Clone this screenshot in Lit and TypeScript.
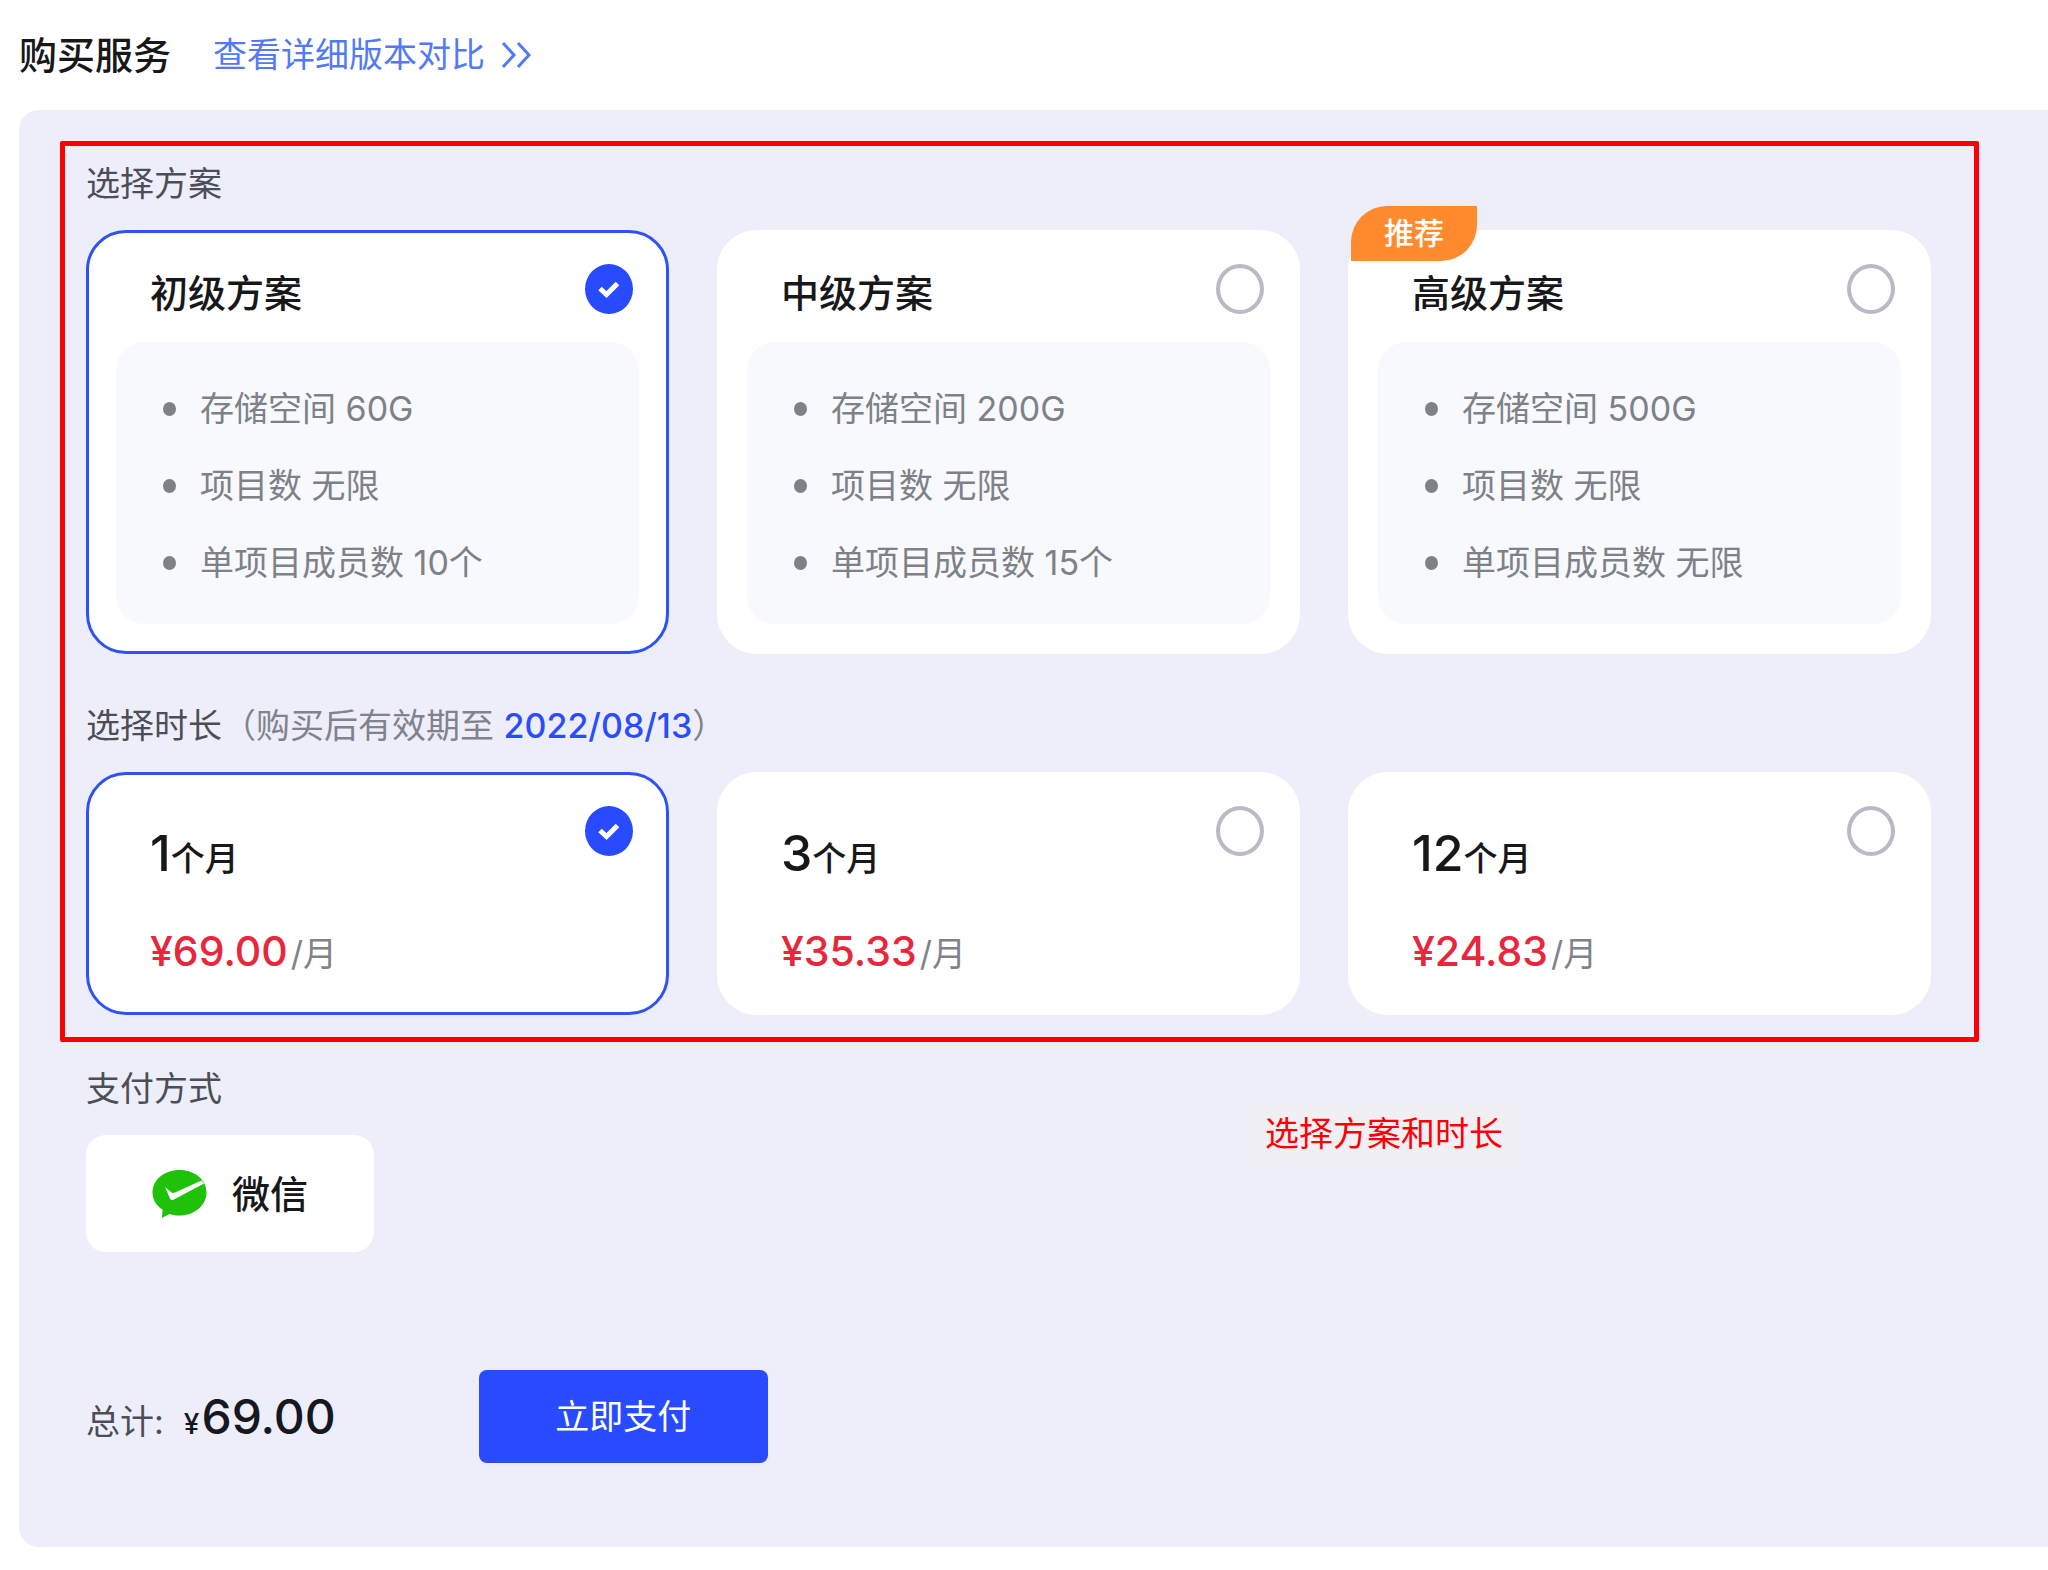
import { LitElement, html, css, svg, nothing } from "lit";
import { customElement, state } from "lit/decorators.js";

interface Plan {
  id: string;
  name: string;
  recommended?: boolean;
  features: string[];
}

interface Duration {
  months: number;
  price: string;
  total: string;
}

const PLANS: Plan[] = [
  { id: "basic", name: "初级方案", features: ["存储空间 60G", "项目数 无限", "单项目成员数 10个"] },
  { id: "middle", name: "中级方案", features: ["存储空间 200G", "项目数 无限", "单项目成员数 15个"] },
  { id: "senior", name: "高级方案", recommended: true, features: ["存储空间 500G", "项目数 无限", "单项目成员数 无限"] },
];

const DURATIONS: Duration[] = [
  { months: 1, price: "69.00", total: "69.00" },
  { months: 3, price: "35.33", total: "105.99" },
  { months: 12, price: "24.83", total: "297.96" },
];

const check = svg`<path d="M15 24.500 L21.5 30.5 L32.500 19.500" fill="none" stroke="#fff" stroke-width="5" />`;

@customElement("app-root")
export class AppRoot extends LitElement {
  @state() private plan = "basic";
  @state() private months = 1;

  static styles = css`
    :host {
      display: block;
      font-family: Inter, "Noto Sans CJK SC", sans-serif;
      font-size: 34px;
      line-height: 48px;
      color: #4c4e57;
      background: #fff;
      overflow-x: hidden;
    }
    * {
      box-sizing: border-box;
    }
    .header {
      display: flex;
      align-items: center;
      gap: 42px;
      padding: 31px 19px;
    }
    .title {
      margin: 0;
      font-size: 38px;
      font-weight: 500;
      color: #17181a;
    }
    .compare {
      display: flex;
      align-items: center;
      gap: 16px;
      color: #5479f7;
      text-decoration: none;
    }
    .chevrons {
      width: 30px;
      height: 26px;
    }
    .panel {
      margin: 0 0 23px 19px;
      padding: 31px 69px 84px 41px;
      border-radius: 20px 0 0 20px;
      background: #eeeefa;
    }
    .selection {
      display: flex;
      flex-direction: column;
      gap: 48px;
      padding: 14px 43px 22px 21px;
      border: 5px solid #fb0007;
      border-radius: 2px;
    }
    .group {
      min-width: 0;
      margin: 0;
      padding: 0;
      border: 0;
    }
    .label {
      display: block;
      margin: 0 0 22px;
      padding: 0;
      font-size: 34px;
      font-weight: 400;
    }
    .hint {
      color: #80838b;
    }
    .date {
      color: #2a4dfb;
      font-weight: 500;
    }
    .cards {
      display: grid;
      grid-template-columns: repeat(3, minmax(0, 1fr));
      gap: 48px;
    }
    .card {
      position: relative;
      padding: 27px;
      border: 3px solid #fff;
      border-radius: 40px;
      background: #fff;
      cursor: pointer;
    }
    .card.selected {
      border-color: #2f52f5;
    }
    .head {
      display: flex;
      justify-content: space-between;
      align-items: flex-start;
      padding: 4px 6px 20px 34px;
    }
    .name {
      font-size: 38px;
      line-height: 58px;
      font-weight: 500;
      color: #17181a;
    }
    .radio {
      position: relative;
      flex: none;
      width: 48px;
      height: 50px;
    }
    .radio input {
      display: block;
      appearance: none;
      width: 100%;
      height: 100%;
      margin: 0;
      border: 4px solid #b9bac6;
      border-radius: 50%;
      cursor: pointer;
    }
    .radio input:checked {
      border-color: #284bff;
      background: #284bff;
    }
    .tick {
      position: absolute;
      inset: 0;
      pointer-events: none;
    }
    .features {
      margin: 0;
      padding: 28px 20px 23px 47px;
      border-radius: 28px;
      background: #f7f9fd;
      list-style: none;
      color: #7e8187;
      line-height: 77px;
    }
    .feature {
      display: flex;
      align-items: center;
      gap: 24px;
    }
    .feature::before {
      content: "";
      width: 13px;
      height: 14px;
      border-radius: 50%;
      background: #7e8187;
    }
    .badge {
      position: absolute;
      top: -27px;
      left: 0;
      padding: 0 33px;
      border-radius: 36px 0 36px 0;
      background: #ff8b2e;
      color: #fff;
      font-size: 30px;
      line-height: 55px;
      font-weight: 500;
    }
    .terms {
      display: flex;
      flex-direction: column;
      gap: 32px;
      padding: 17px 0 1px;
      line-height: 60px;
    }
    .duration {
      padding-bottom: 0;
    }
    .term {
      font-weight: 500;
      color: #17181a;
    }
    .count {
      font-size: 50px;
    }
    .price {
      color: #e8273d;
      font-size: 41px;
      font-weight: 500;
    }
    .per {
      padding-left: 3px;
      color: #80838b;
    }
    .payment {
      display: flex;
      justify-content: space-between;
      align-items: flex-start;
      padding: 23px 460px 0 26px;
    }
    .wechat {
      display: flex;
      align-items: center;
      justify-content: center;
      gap: 25px;
      width: 288px;
      height: 117px;
      padding: 0;
      border: 0;
      border-radius: 20px;
      background: #fff;
      color: #17181a;
      font: 500 38px/48px Inter, "Noto Sans CJK SC", sans-serif;
      cursor: pointer;
    }
    .wechat svg {
      width: 55px;
      height: 48px;
    }
    .note {
      margin: 38px 0 0;
      padding: 7px 16px;
      background: #f0eff4;
      color: #fb0007;
    }
    .checkout {
      display: flex;
      align-items: center;
      gap: 143px;
      padding: 118px 0 0 26px;
    }
    .total {
      display: flex;
      align-items: baseline;
      margin: 0;
      padding-top: 8px;
    }
    .currency {
      margin: 0 2px 0 20px;
      font-size: 28px;
      font-weight: 500;
      color: #17181f;
    }
    .sum {
      font-size: 48px;
      font-weight: 500;
      color: #17181f;
    }
    .pay {
      width: 289px;
      height: 93px;
      border: 0;
      border-radius: 8px;
      background: #284bff;
      color: #fff;
      font: 400 34px/48px Inter, "Noto Sans CJK SC", sans-serif;
      cursor: pointer;
    }
  `;

  private renderRadio(group: string, value: string, checked: boolean, pick: () => void) {
    return html`<span class="radio">
      <input type="radio" id=${`${group}-${value}`} name=${group} .value=${value} .checked=${checked} @change=${pick} />
      ${checked ? html`<svg class="tick" viewBox="0 0 48 50" aria-hidden="true">${check}</svg>` : nothing}
    </span>`;
  }

  private renderPlan(p: Plan) {
    const on = this.plan === p.id;
    return html`<label class="card ${on ? "selected" : ""}" for=${`plan-${p.id}`}>
      ${p.recommended ? html`<span class="badge">推荐</span>` : nothing}
      <div class="head">
        <span class="name">${p.name}</span>
        ${this.renderRadio("plan", p.id, on, () => (this.plan = p.id))}
      </div>
      <ul class="features">
        ${p.features.map((f) => html`<li class="feature">${f}</li>`)}
      </ul>
    </label>`;
  }

  private renderDuration(d: Duration) {
    const on = this.months === d.months;
    return html`<label class="card ${on ? "selected" : ""}" for=${`duration-${d.months}`}>
      <div class="head duration">
        <div class="terms">
          <div class="term"><span class="count">${d.months}</span>个月</div>
          <div><span class="price">¥${d.price}</span><span class="per">/月</span></div>
        </div>
        ${this.renderRadio("duration", String(d.months), on, () => (this.months = d.months))}
      </div>
    </label>`;
  }

  render() {
    const total = DURATIONS.find((d) => d.months === this.months)!.total;
    return html`
      <header class="header">
        <h1 class="title">购买服务</h1>
        <a class="compare" href="#compare">
          查看详细版本对比
          <svg class="chevrons" viewBox="0 0 30 26" fill="none" stroke="currentColor" stroke-width="3" aria-hidden="true">
            <path d="M2 1 L13 13 L2 25 M17 1 L28 13 L17 25" />
          </svg>
        </a>
      </header>
      <main class="panel">
        <div class="selection">
          <fieldset class="group">
            <legend class="label">选择方案</legend>
            <div class="cards">${PLANS.map((p) => this.renderPlan(p))}</div>
          </fieldset>
          <fieldset class="group">
            <legend class="label">选择时长<span class="hint">（购买后有效期至 <span class="date">2022/08/13</span>）</span></legend>
            <div class="cards">${DURATIONS.map((d) => this.renderDuration(d))}</div>
          </fieldset>
        </div>
        <div class="payment">
          <section>
            <h2 class="label">支付方式</h2>
            <button class="wechat" type="button">
              <svg viewBox="0 0 55 48" aria-hidden="true">
                <path fill="#1fc209" d="M27.500 0C42.700 0 54.500 9.800 54.500 22.500S42.700 45.500 27.500 45.500C24 45.500 20.500 45 17.500 44L10 48L10.500 39.500C4.200 35.500 0.500 29.500 0.500 22.500C0.500 9.800 12.300 0 27.500 0Z" />
                <path fill="#fff" d="M13 17L19.500 22.500Q21 23.300 23 22.500L49.500 10.500L52 13.500L21.500 29.800Q19 31 18 28.500Z" />
              </svg>
              微信
            </button>
          </section>
          <p class="note">选择方案和时长</p>
        </div>
        <div class="checkout">
          <p class="total">总计:<span class="currency">¥</span><span class="sum">${total}</span></p>
          <button class="pay" type="button">立即支付</button>
        </div>
      </main>
    `;
  }
}
